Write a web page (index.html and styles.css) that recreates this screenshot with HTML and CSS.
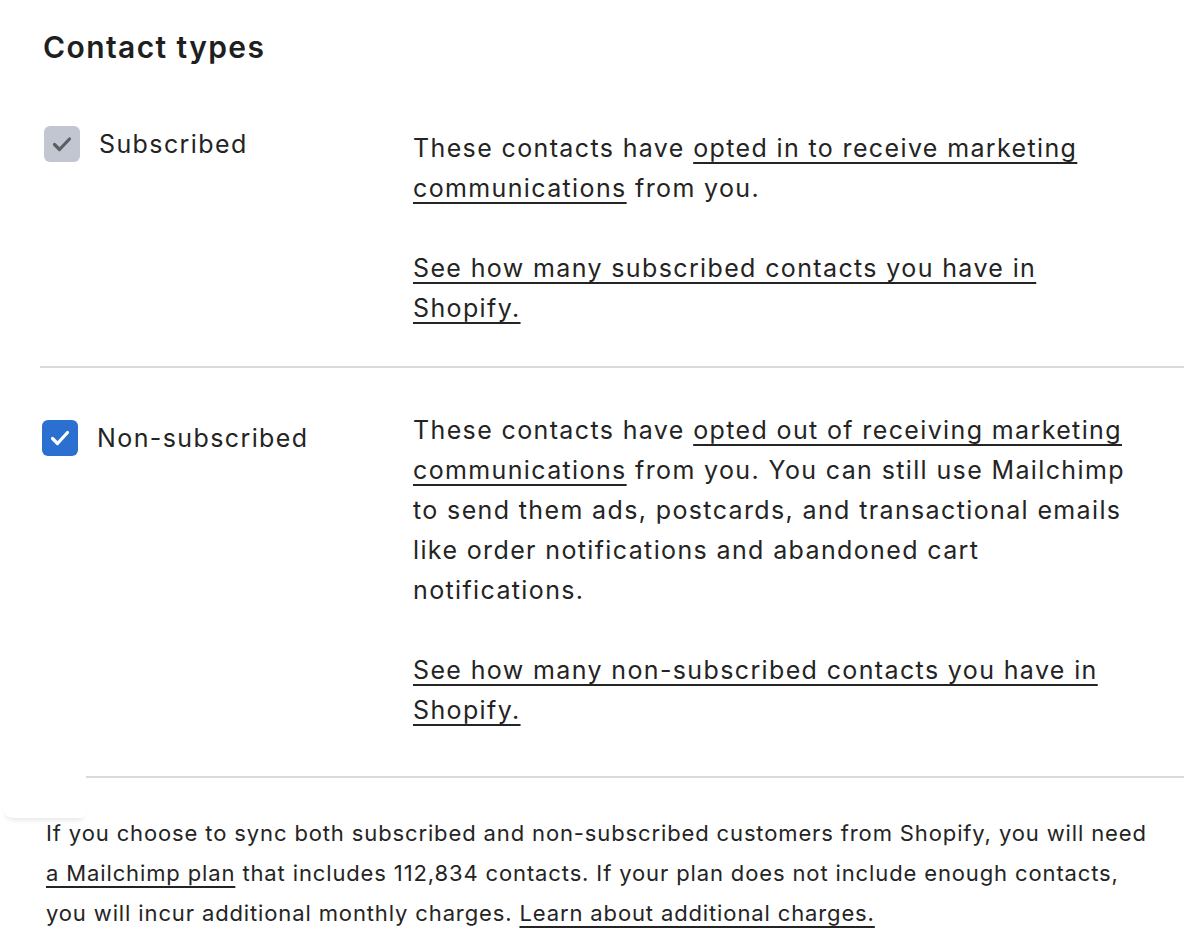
FILE: index.html
```html
<!DOCTYPE html>
<html lang="en">
<head>
<meta charset="utf-8">
<title>Contact types</title>
<link rel="stylesheet" href="styles.css">
</head>
<body>
<main class="page">
  <h2 class="title">Contact types</h2>

  <section class="row row-first">
    <label class="choice choice-sub">
      <span class="box box-disabled">
        <svg viewBox="0 0 36 36" width="36" height="36"><path d="M10.5 18.5 L15.5 23.5 L25.5 13" fill="none" stroke="#5b5e63" stroke-width="3.2" stroke-linecap="round" stroke-linejoin="round"/></svg>
      </span>
      <span class="label-text">Subscribed</span>
    </label>
    <div class="desc">
      <p>These contacts have <a href="#">opted in to receive marketing communications</a> from you.</p>
      <p><a href="#">See how many subscribed contacts you have in Shopify.</a></p>
    </div>
  </section>

  <section class="row row-second">
    <label class="choice choice-non">
      <span class="box box-checked">
        <svg viewBox="0 0 36 36" width="36" height="36"><path d="M10.5 18.5 L15.5 23.5 L25.5 12.5" fill="none" stroke="#ffffff" stroke-width="3.2" stroke-linecap="round" stroke-linejoin="round"/></svg>
      </span>
      <span class="label-text">Non-subscribed</span>
    </label>
    <div class="desc">
      <p>These contacts have <a href="#">opted out of receiving marketing communications</a> from you. You can still use Mailchimp to send them ads, postcards, and transactional emails like order notifications and abandoned cart notifications.</p>
      <p><a href="#">See how many non-subscribed contacts you have in Shopify.</a></p>
    </div>
  </section>

  <div class="rule-wrap">
    <div class="floating-card"></div>
  </div>

  <p class="note">If you choose to sync both subscribed and non-subscribed customers from Shopify, you will need <a href="#">a Mailchimp plan</a> that includes 112,834 contacts. If your plan does not include enough contacts, you will incur additional monthly charges. <a href="#">Learn about additional charges.</a></p>
</main>
</body>
</html>
```

FILE: styles.css
```css
* { box-sizing: border-box; }

html, body {
  margin: 0;
  padding: 0;
  background: #ffffff;
}

body {
  font-family: Inter, "Open Sans", "Liberation Sans", sans-serif;
  color: #242424;
  overflow: hidden;
}

.page {
  width: 1184px;
  height: 952px;
  padding: 0 0 0 40px;
}

.title {
  margin: 0;
  padding: 27px 0 0 3px;
  font-size: 30px;
  line-height: 40px;
  font-weight: 600;
  color: #1e1f21;
  letter-spacing: 1.4px;
}

.row {
  display: flex;
  align-items: flex-start;
  border-bottom: 2px solid #dadada;
}

.row-first {
  padding-top: 61px;
  padding-bottom: 38px;
}

.row-second {
  padding-top: 42px;
  padding-bottom: 46px;
  border-bottom: none;
}

.choice {
  width: 373px;
  flex: none;
  display: flex;
  align-items: center;
  gap: 19px;
  font-size: 25px;
  line-height: 40px;
  letter-spacing: 1.4px;
}

.choice-sub {
  padding-left: 4px;
  margin-top: -4px;
}

.choice-non {
  padding-left: 2px;
  margin-top: 8px;
}

.box {
  width: 36px;
  height: 36px;
  border-radius: 6px;
  flex: none;
  display: flex;
}

.box-disabled { background: #c2c6d0; }
.box-checked { background: #2b6fd0; }

.desc {
  width: 728px;
  font-size: 25px;
  line-height: 40px;
  letter-spacing: 1.37px;
}

.desc p {
  margin: 0 0 40px 0;
}

.desc p:last-child { margin-bottom: 0; }

a {
  color: inherit;
  text-decoration: underline;
  text-decoration-thickness: 2px;
  text-underline-offset: 5px;
}

.rule-wrap {
  position: relative;
  height: 2px;
  margin-left: 46px;
  background: #dadada;
}

.floating-card {
  position: absolute;
  left: -83px;
  top: -6px;
  width: 83px;
  height: 48px;
  background: #ffffff;
  border-radius: 0 0 6px 10px;
  box-shadow: 0 5px 5px -3px rgba(0, 0, 0, 0.10);
}

.note {
  margin: 35px 0 0 6px;
  width: 1114px;
  font-size: 22px;
  line-height: 40px;
  letter-spacing: 0.87px;
}
```
